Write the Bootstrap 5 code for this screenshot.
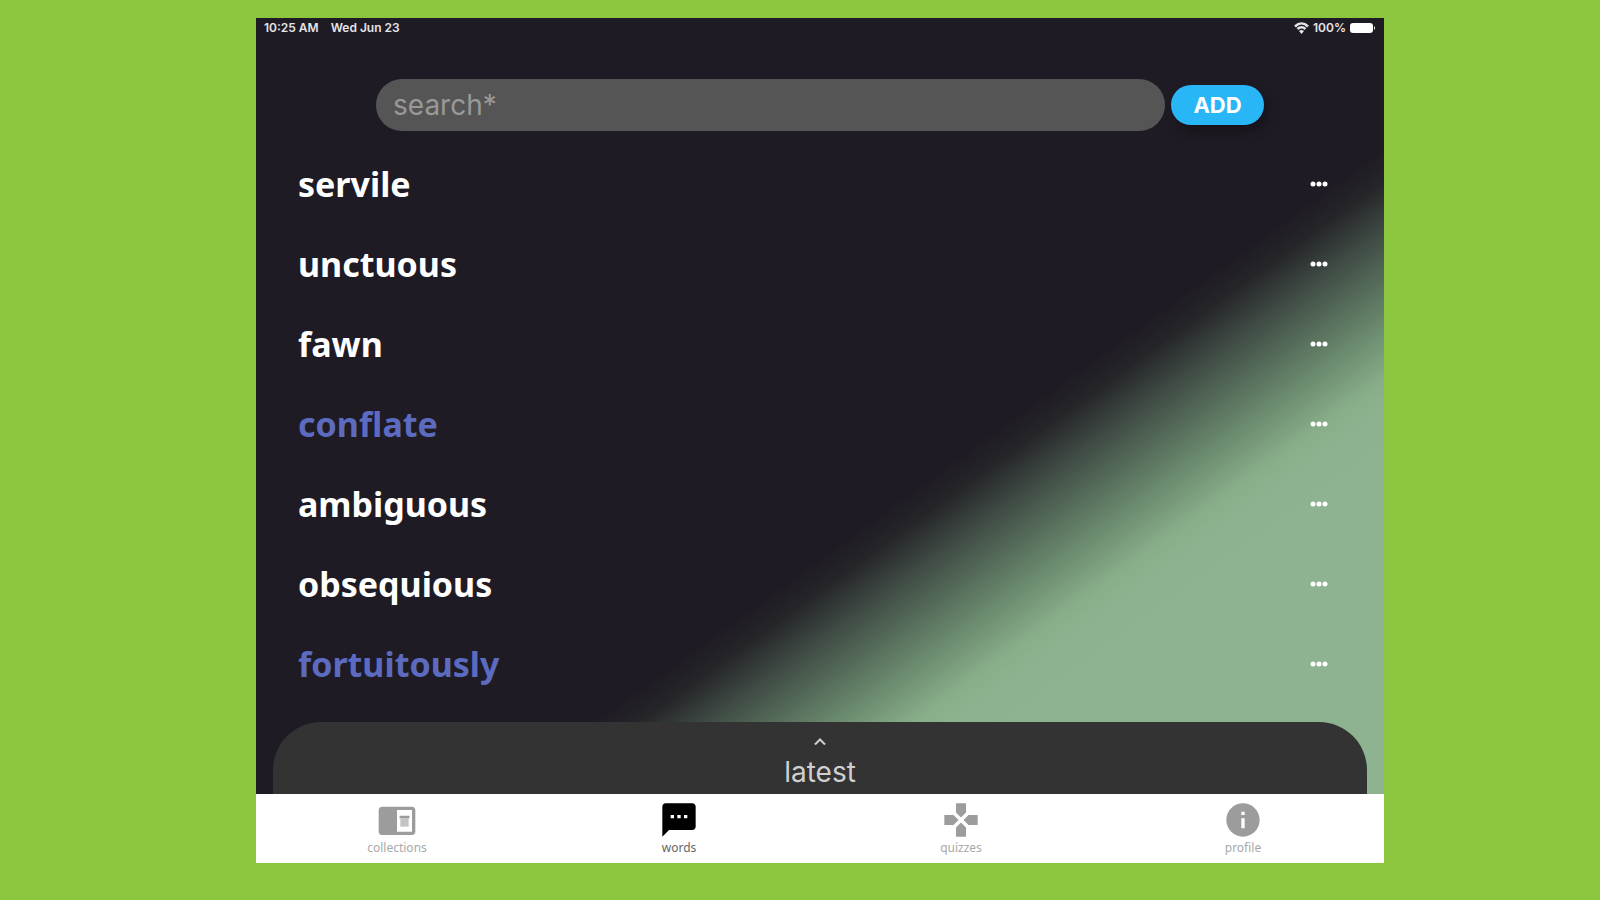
<!DOCTYPE html>
<html lang="en">
<head>
<meta charset="utf-8">
<meta name="viewport" content="width=device-width, initial-scale=1">
<title>Words</title>
<link rel="stylesheet" href="https://cdn.jsdelivr.net/npm/bootstrap@5.3.0/dist/css/bootstrap.min.css">
<script src="https://cdn.jsdelivr.net/npm/bootstrap@5.3.0/dist/js/bootstrap.bundle.min.js"></script>
<style>
  body { background: #8cc63e; font-family: Inter, "Liberation Sans", sans-serif; }
  .tablet {
    margin: 18px 13.5% 18px 16%;
    background: linear-gradient(144deg, #1f1b24 57%, #252529 59%, #3f4b44 62%, #66846a 67%, #88ae89 71%, #8cb28f 73%, #8db391 76%);
  }
  .status-bar { height: 20px; font-size: 12px; line-height: 20px; font-weight: 600; color: #e4e4e8; }
  .search-row { margin: 41px 120px 13px; gap: 6px; }
  .search-box, .search-box:focus {
    height: 52px; padding: 0 17px; font-size: 28px;
    background: #555; color: #fff; border: 0; box-shadow: none;
  }
  .search-box::placeholder { color: #999; opacity: 1; }
  .add-btn, .add-btn:hover {
    width: 93px; height: 40px; padding: 0; font-size: 22px; line-height: 40px; font-weight: 700;
    color: #fff; background: #29b6f6; border: 0; box-shadow: 4px 6px 10px #17131a;
  }
  .word-list { padding: 0 42px; margin-bottom: 18px; }
  .word-list li { height: 80px; }
  .word-link { font: 700 34px/40px "Noto Sans", sans-serif; color: #fff; }
  .word-link.learned { color: #5c6bc0; }
  .more-btn { padding: 10px 14px; border: 0; }
  .drawer {
    height: 72px; margin: 0 17px; padding-top: 16px; background: #333; color: #d0d0d0;
    border: 0; border-radius: 48px 48px 0 0; font-size: 28px; line-height: 40px;
  }
  .drawer svg { margin-bottom: 6px; }
  .tab-bar { height: 69px; }
  .tab-link { padding-top: 6px; font: 12px/16px "Noto Sans", sans-serif; color: #9c9c9c; }
  .tab-link.current { color: #000; }
  .tab-link span { color: #a8a8a8; }
  .tab-link.current span { color: #666; }
</style>
</head>
<body>
<main class="tablet d-flex flex-column">
  <div class="status-bar d-flex align-items-center justify-content-between px-2">
    <div class="d-flex gap-2"><span>10:25 AM</span><span class="ms-1">Wed Jun 23</span></div>
    <div class="d-flex align-items-center gap-1">
      <svg width="15" height="12" viewBox="0 0 15 12" fill="none" stroke="#e4e4e8" stroke-width="2.500" aria-hidden="true"><path d="M1 4.500C5 .5 10 .5 14 4.500M3.500 7C6 4.800 9 4.800 11.500 7"/><path d="M5 9L7.500 12 10 9Q7.500 7 5 9z" fill="#e4e4e8" stroke="none"/></svg>
      <span>100%</span>
      <svg width="26" height="12" viewBox="0 0 26 12" fill="#fff" aria-hidden="true"><rect y="1" width="23" height="10" rx="3"/><path d="M24 4q2 2 0 4z"/></svg>
    </div>
  </div>

  <form class="search-row d-flex align-items-center">
    <input class="search-box form-control rounded-pill" type="text" placeholder="search*" aria-label="search">
    <button class="add-btn btn rounded-pill flex-shrink-0" type="button">ADD</button>
  </form>

  <ul class="word-list list-unstyled">
    <li class="d-flex align-items-center justify-content-between"><a class="word-link text-decoration-none" href="#">servile</a><button class="more-btn btn d-flex" type="button" aria-label="More"><svg width="18" height="6" fill="#fff"><circle cx="3" cy="3" r="2.500"/><circle cx="9" cy="3" r="2.500"/><circle cx="15" cy="3" r="2.500"/></svg></button></li>
    <li class="d-flex align-items-center justify-content-between"><a class="word-link text-decoration-none" href="#">unctuous</a><button class="more-btn btn d-flex" type="button" aria-label="More"><svg width="18" height="6" fill="#fff"><circle cx="3" cy="3" r="2.500"/><circle cx="9" cy="3" r="2.500"/><circle cx="15" cy="3" r="2.500"/></svg></button></li>
    <li class="d-flex align-items-center justify-content-between"><a class="word-link text-decoration-none" href="#">fawn</a><button class="more-btn btn d-flex" type="button" aria-label="More"><svg width="18" height="6" fill="#fff"><circle cx="3" cy="3" r="2.500"/><circle cx="9" cy="3" r="2.500"/><circle cx="15" cy="3" r="2.500"/></svg></button></li>
    <li class="d-flex align-items-center justify-content-between"><a class="word-link learned text-decoration-none" href="#">conflate</a><button class="more-btn btn d-flex" type="button" aria-label="More"><svg width="18" height="6" fill="#fff"><circle cx="3" cy="3" r="2.500"/><circle cx="9" cy="3" r="2.500"/><circle cx="15" cy="3" r="2.500"/></svg></button></li>
    <li class="d-flex align-items-center justify-content-between"><a class="word-link text-decoration-none" href="#">ambiguous</a><button class="more-btn btn d-flex" type="button" aria-label="More"><svg width="18" height="6" fill="#fff"><circle cx="3" cy="3" r="2.500"/><circle cx="9" cy="3" r="2.500"/><circle cx="15" cy="3" r="2.500"/></svg></button></li>
    <li class="d-flex align-items-center justify-content-between"><a class="word-link text-decoration-none" href="#">obsequious</a><button class="more-btn btn d-flex" type="button" aria-label="More"><svg width="18" height="6" fill="#fff"><circle cx="3" cy="3" r="2.500"/><circle cx="9" cy="3" r="2.500"/><circle cx="15" cy="3" r="2.500"/></svg></button></li>
    <li class="d-flex align-items-center justify-content-between"><a class="word-link learned text-decoration-none" href="#">fortuitously</a><button class="more-btn btn d-flex" type="button" aria-label="More"><svg width="18" height="6" fill="#fff"><circle cx="3" cy="3" r="2.500"/><circle cx="9" cy="3" r="2.500"/><circle cx="15" cy="3" r="2.500"/></svg></button></li>
  </ul>

  <button class="drawer d-flex flex-column align-items-center" type="button">
    <svg class="flex-shrink-0" width="14" height="8" viewBox="0 0 14 8" fill="none" stroke="#d0d0d0" stroke-width="2" aria-hidden="true"><path d="M2 6.500L7 1.500 12 6.500"/></svg>
    <span>latest</span>
  </button>

  <nav class="tab-bar row g-0 bg-white">
    <a class="tab-link col d-flex flex-column align-items-center text-decoration-none" href="#">
      <svg width="40" height="40" viewBox="0 0 24 24" fill="currentColor" aria-hidden="true"><path d="M21 4H3c-1.100 0-2 .9-2 2v13c0 1.100.9 2 2 2h18c1.100 0 2-.9 2-2V6c0-1.100-.9-2-2-2zm0 15h-9V6h9v13zM13.500 9.500h6V11h-6z" fill-rule="evenodd"/><path d="M14 11h5v5h-5z" opacity=".6"/></svg>
      <span>collections</span>
    </a>
    <a class="tab-link current col d-flex flex-column align-items-center text-decoration-none" href="#">
      <svg width="40" height="40" viewBox="0 0 24 24" fill="currentColor" aria-hidden="true"><path d="M20 2H4c-1.100 0-1.990.9-1.990 2L2 22l4-4h14c1.100 0 2-.9 2-2V4c0-1.100-.9-2-2-2zM9 11H7V9h2v2zm4 0h-2V9h2v2zm4 0h-2V9h2v2z"/></svg>
      <span>words</span>
    </a>
    <a class="tab-link col d-flex flex-column align-items-center text-decoration-none" href="#">
      <svg width="40" height="40" viewBox="0 0 24 24" fill="currentColor" aria-hidden="true"><path d="M15 7.500V2H9v5.500l3 3 3-3zM7.500 9H2v6h5.500l3-3-3-3zM9 16.500V22h6v-5.500l-3-3-3 3zM16.500 9l-3 3 3 3H22V9h-5.500z"/></svg>
      <span>quizzes</span>
    </a>
    <a class="tab-link col d-flex flex-column align-items-center text-decoration-none" href="#">
      <svg width="40" height="40" viewBox="0 0 24 24" fill="currentColor" aria-hidden="true"><path d="M12 2C6.480 2 2 6.480 2 12s4.480 10 10 10 10-4.480 10-10S17.520 2 12 2zm1 15h-2v-6h2v6zm0-8h-2V7h2v2z"/></svg>
      <span>profile</span>
    </a>
  </nav>
</main>
</body>
</html>
